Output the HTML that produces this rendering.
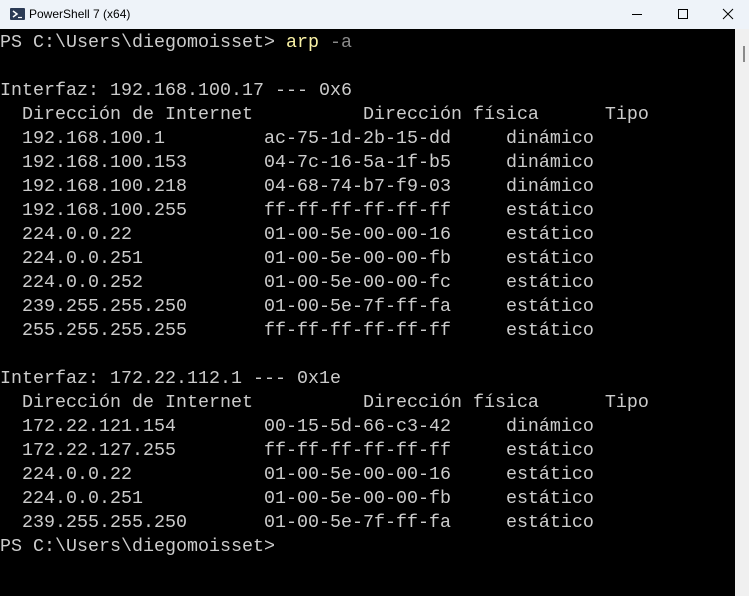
<!DOCTYPE html>
<html><head><meta charset="utf-8"><style>
html,body{margin:0;padding:0;width:749px;height:596px;overflow:hidden;background:#000}
.title{position:absolute;left:0;top:0;width:749px;height:29px;background:#eef3f9;font-family:"Liberation Sans",sans-serif;font-size:12px;color:#000}
.title .t{position:absolute;left:29px;top:7px}
.icon{position:absolute;left:10px;top:8px;width:15px;height:12px;background:#2b3a55;border-radius:1px}
.ctl{position:absolute;top:0;height:29px}
.term{position:absolute;left:0;top:29px;width:735px;height:567px;background:#000}
pre{margin:0;position:relative;top:2px;font-family:"Liberation Mono","DejaVu Sans Mono",monospace;font-size:18.33px;line-height:24px;color:#cccccc}
.y{color:#f9f1a5}.g{color:#8a8a8a}
.sb{position:absolute;left:735px;top:29px;width:14px;height:567px;background:#f0f0f0}
.th{position:absolute;left:743px;top:46px;width:2px;height:16px;background:#8a8a8a}
</style></head><body>
<div class="title"><div class="icon"><svg width="15" height="12" viewBox="0 0 15 12"><path d="M3 3 L7 6 L3 9" stroke="#fff" stroke-width="1.5" fill="none"/><path d="M8 9.5 H12" stroke="#fff" stroke-width="1.2"/></svg></div><span class="t">PowerShell 7 (x64)</span>
<svg class="ctl" style="left:628px" width="20" height="29"><path d="M4 14.5 H14" stroke="#000" stroke-width="1"/></svg>
<svg class="ctl" style="left:672px" width="20" height="29"><rect x="6.5" y="9.5" width="9" height="9" stroke="#000" fill="none"/></svg>
<svg class="ctl" style="left:718px" width="20" height="29"><path d="M5 9 L15 19 M15 9 L5 19" stroke="#000" stroke-width="1"/></svg>
</div>
<div class="term"><pre>PS C:\Users\diegomoisset&gt; <span class="y">arp</span> <span class="g">-a</span>

Interfaz: 192.168.100.17 --- 0x6
  Dirección de Internet          Dirección física      Tipo
  192.168.100.1         ac-75-1d-2b-15-dd     dinámico
  192.168.100.153       04-7c-16-5a-1f-b5     dinámico
  192.168.100.218       04-68-74-b7-f9-03     dinámico
  192.168.100.255       ff-ff-ff-ff-ff-ff     estático
  224.0.0.22            01-00-5e-00-00-16     estático
  224.0.0.251           01-00-5e-00-00-fb     estático
  224.0.0.252           01-00-5e-00-00-fc     estático
  239.255.255.250       01-00-5e-7f-ff-fa     estático
  255.255.255.255       ff-ff-ff-ff-ff-ff     estático

Interfaz: 172.22.112.1 --- 0x1e
  Dirección de Internet          Dirección física      Tipo
  172.22.121.154        00-15-5d-66-c3-42     dinámico
  172.22.127.255        ff-ff-ff-ff-ff-ff     estático
  224.0.0.22            01-00-5e-00-00-16     estático
  224.0.0.251           01-00-5e-00-00-fb     estático
  239.255.255.250       01-00-5e-7f-ff-fa     estático
PS C:\Users\diegomoisset&gt;</pre></div>
<div class="sb"></div><div class="th"></div>
</body></html>
